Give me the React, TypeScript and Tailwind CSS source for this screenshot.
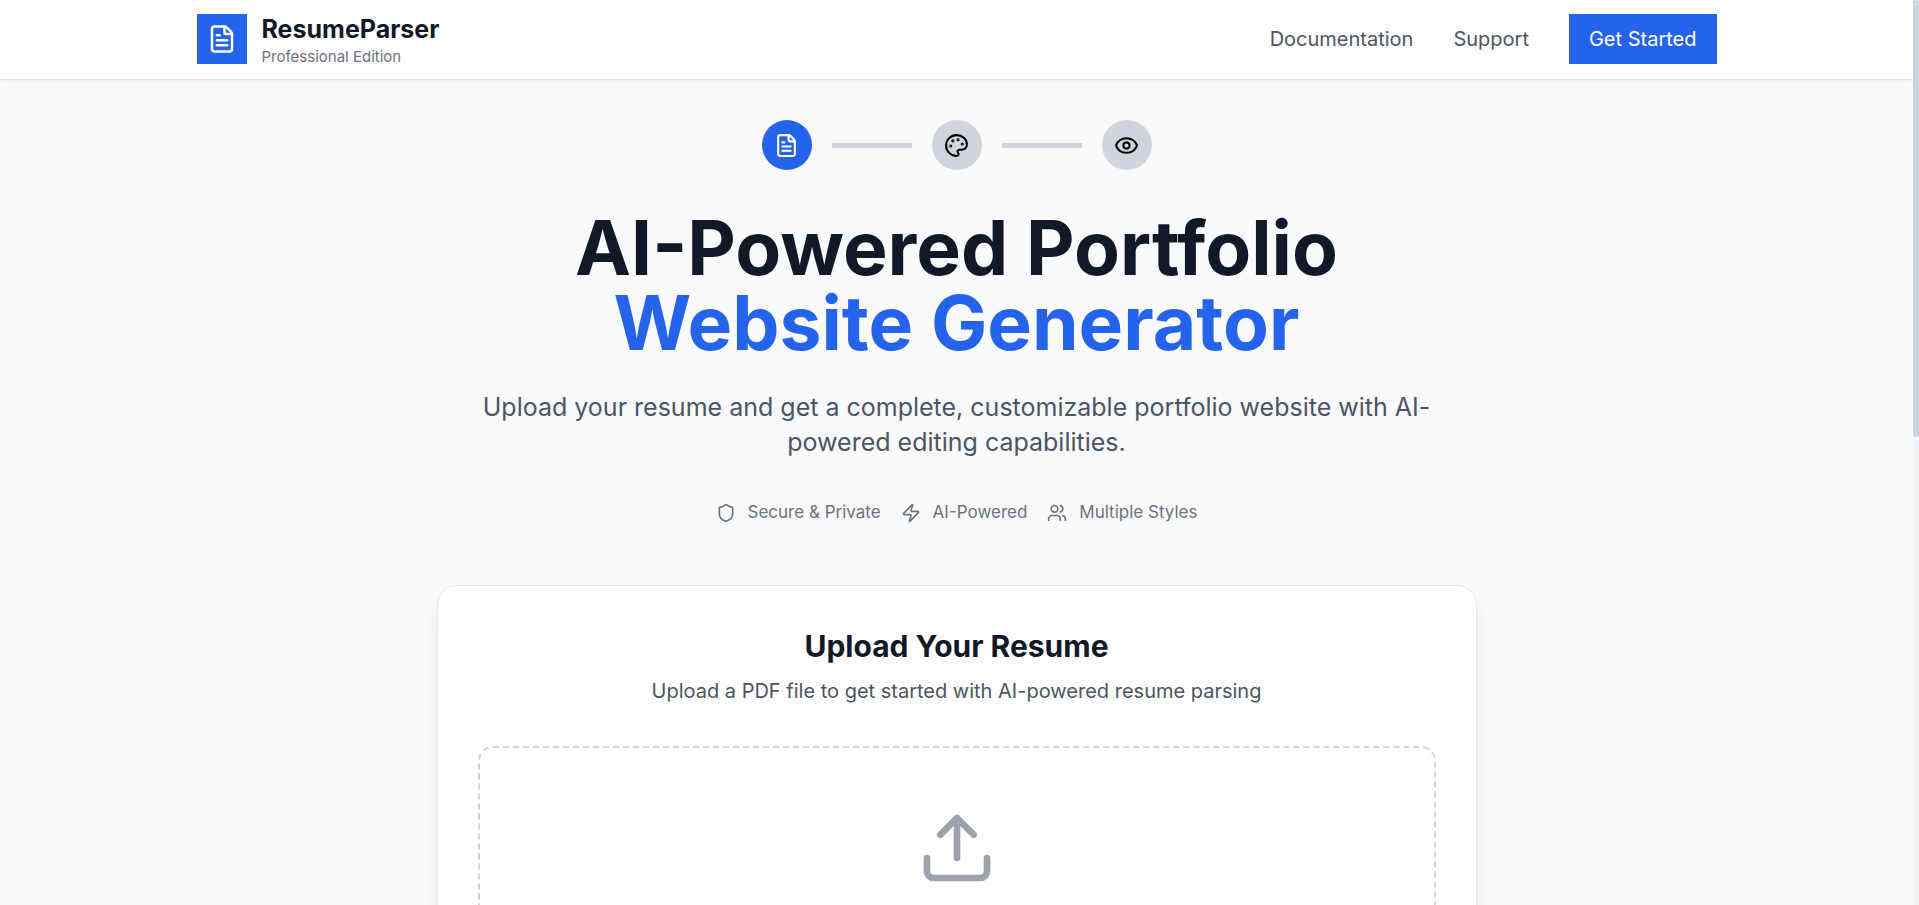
import React from "react";
import { Eye, FileText, Palette, Shield, Upload, Users, Zap } from "lucide-react";

const features = [
  { label: "Secure & Private", Icon: Shield },
  { label: "AI-Powered", Icon: Zap },
  { label: "Multiple Styles", Icon: Users },
];

function Header() {
  return (
    <header className="relative h-20 border-b border-[#e5e7eb] bg-white shadow-[0_1px_3px_0_rgba(0,0,0,0.06)]">
      <div className="mx-auto flex h-[78px] max-w-[1600px] items-center justify-between px-10">
        <div className="flex items-center gap-[15px]">
          <div className="flex size-[50px] items-center justify-center bg-[#2563eb] text-white">
            <FileText size={30} />
          </div>
          <div>
            <p className="text-[25px] leading-[35px] font-bold text-[#111827]">ResumeParser</p>
            <p className="text-[15px] leading-5 text-[#6b7280]">Professional Edition</p>
          </div>
        </div>
        <nav className="flex items-center gap-10 text-xl leading-[30px] text-[#4b5563]">
          <a href="#documentation">Documentation</a>
          <a href="#support">Support</a>
          <button type="button" className="bg-[#2563eb] px-5 py-2.5 text-white">
            Get Started
          </button>
        </nav>
      </div>
    </header>
  );
}

function Steps() {
  return (
    <div className="flex items-center justify-center gap-5 text-black">
      <div className="flex size-[50px] items-center justify-center rounded-full bg-[#2563eb] text-white">
        <FileText size={25} />
      </div>
      <div className="h-[5px] w-20 bg-[#d1d5db]" />
      <div className="flex size-[50px] items-center justify-center rounded-full bg-[#d1d5db]">
        <Palette size={25} />
      </div>
      <div className="h-[5px] w-20 bg-[#d1d5db]" />
      <div className="flex size-[50px] items-center justify-center rounded-full bg-[#d1d5db]">
        <Eye size={25} />
      </div>
    </div>
  );
}

function UploadCard() {
  return (
    <section className="mx-auto mt-[60px] max-w-[1040px] rounded-[20px] border border-[#e5e7eb] bg-white p-10 shadow-[0_12px_18px_-4px_rgba(0,0,0,0.1),0_5px_8px_-5px_rgba(0,0,0,0.1)]">
      <h2 className="text-center text-3xl leading-10 font-bold text-[#111827]">Upload Your Resume</h2>
      <p className="mt-2.5 text-center text-xl leading-[30px] text-[#4b5563]">
        Upload a PDF file to get started with AI-powered resume parsing
      </p>
      <label className="mt-10 flex cursor-pointer justify-center rounded-[15px] border-2 border-dashed border-[#d1d5db] p-[60px] text-[#9ca3af]">
        <Upload size={80} />
        <input type="file" accept="application/pdf" aria-label="Resume PDF" className="sr-only" />
      </label>
    </section>
  );
}

export default function App() {
  return (
    <div className="flex h-screen overflow-hidden bg-[#f9fafc] font-['Inter',sans-serif]">
      <div className="min-w-0 flex-1">
        <Header />
        <main className="px-10 py-10">
          <Steps />
          <h1 className="mt-10 text-center text-[75px] leading-none font-bold text-[#111827]">
            AI-Powered Portfolio
            <span className="block text-[#2563eb]">Website Generator</span>
          </h1>
          <p className="mx-auto mt-[30px] max-w-[960px] text-center text-[25px] leading-[35px] text-[#4b5563]">
            Upload your resume and get a complete, customizable portfolio website with AI-powered editing
            capabilities.
          </p>
          <ul className="mt-10 flex items-center justify-center gap-5 text-[17px] leading-[25px] text-[#6b7280]">
            {features.map(({ label, Icon }) => (
              <li key={label} className="flex items-center gap-3">
                <Icon size={20} />
                {label}
              </li>
            ))}
          </ul>
          <UploadCard />
        </main>
      </div>
      <div aria-hidden="true" className="h-full w-1.5 bg-[#f1f5f9]">
        <div className="h-[48.3%] rounded-[3px] bg-[#cbd5e1]" />
      </div>
    </div>
  );
}
